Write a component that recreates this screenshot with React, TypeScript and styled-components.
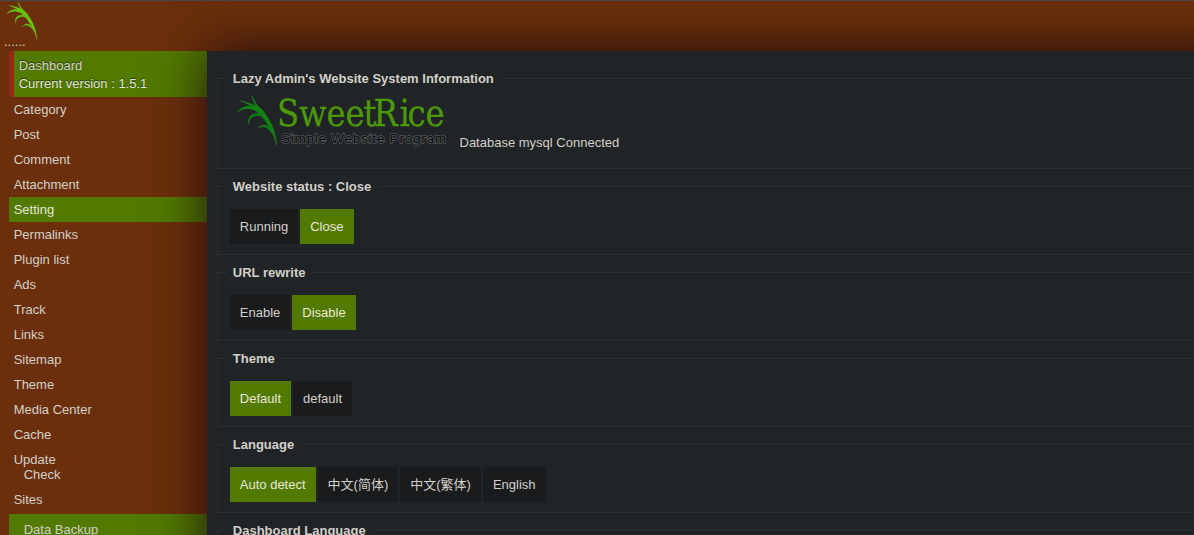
import React from 'react';
import styled, { createGlobalStyle } from 'styled-components';

const GlobalStyle = createGlobalStyle`
  * { box-sizing: border-box; }
  html, body { margin: 0; height: 100%; overflow: hidden; }
  body {
    background: #6b300b;
    color: #d3cfc9;
    font: 13px/15px "Liberation Sans", Arial, "Noto Sans CJK SC", sans-serif;
  }
`;

const Page = styled.div`
  display: flex;
  flex-direction: column;
  height: 535px;
  overflow: hidden;
  border-top: 1px solid #46464a;
`;

const Header = styled.header`
  flex: none;
  height: 50px;
  padding-left: 4px;
`;

const HeaderLogo = styled.div`
  height: 33px;
  padding-left: 2px;
  svg { display: block; }
`;

const Columns = styled.div`
  display: flex;
  flex: 1;
  min-height: 0;
`;

const Sidebar = styled.nav`
  flex: none;
  width: 207px;
  padding-left: 9px;
  white-space: nowrap;
`;

const MenuItem = styled.div<{ $active?: boolean }>`
  padding: 5px 4.7px;
  color: ${(p) => (p.$active ? '#e6e6dc' : 'inherit')};
  background: ${(p) => (p.$active ? '#527a00' : 'transparent')};
`;

const DashboardItem = styled.div`
  height: 46px;
  padding: 6px 4.7px 4px;
  border-left: 5px solid #97261b;
  background: #527a00;
  line-height: 18px;
  text-shadow: 0 -1px 1px rgba(0, 0, 0, 0.55);
`;

const CurrentVersion = styled.div`
  color: #e6e6dc;
`;

const SubItem = styled.div`
  padding-left: 10px;
`;

const SubMenu = styled.div`
  margin-top: 2px;
  padding: 8px 14.7px;
  background: #527a00;
`;

const Content = styled.main`
  position: relative;
  flex: 1;
  min-width: 0;
  height: 620px;
  margin-right: -70px;
  padding: 20px 0 0 10px;
  background: #202426;
  box-shadow: 0 0 50px rgba(25, 4, 18, 0.9);
`;

const Group = styled.fieldset`
  width: 1000px;
  margin: 0 0 10px;
  padding: 15px 12px 10px;
  border: 1px dotted #34383a;
`;

const SystemGroup = styled(Group)`
  height: 98px;
  padding-top: 5px;
`;

const Legend = styled.legend`
  margin-left: -3px;
  padding: 0 5.5px 0 5.8px;
  font-weight: bold;
`;

const Options = styled.div`
  display: flex;
  gap: 2px;
`;

const Option = styled.button<{ $on?: boolean }>`
  height: 35px;
  padding: 0 10.2px 0 9.8px;
  border: 0;
  font: inherit;
  color: ${(p) => (p.$on ? '#e9e7dc' : '#d3cfc9')};
  background: ${(p) => (p.$on ? '#527a00' : '#1a1b1d')};
`;

const SystemInfo = styled.div`
  display: flex;
  align-items: flex-end;
  gap: 9.5px;
  svg { display: block; overflow: visible; }
`;

const Database = styled.span`
  padding-bottom: 1px;
`;

const leaf = [
  'M27 16 Q54 20 73 34 Q106 65 111 118 Q101 76 68 43 Q50 23 27 16Z',
  'M21 41 Q37 21 64 33 L90 56 L76 46 Q45 24 21 41Z',
  'M54 5 Q61 25 81 41 L87 54 L74 42 Q56 23 54 5Z',
  'M46 69 Q42 41 77 46 L83 51 Q48 44 46 69Z',
  'M67 79 Q85 61 102 87 L105 97 Q86 66 67 79Z',
];

const Leaf = ({ color, edge }: { color: string; edge: string }) => (
  <g fill={color} stroke={edge} strokeWidth="1.4" strokeLinejoin="round">
    {leaf.map((d) => <path key={d} d={d} />)}
  </g>
);

const BrandLogo = () => (
  <svg width="220" height="60" viewBox="0 0 220 60">
    <g transform="translate(-1.3 3) scale(0.433)">
      <Leaf color="#088a08" edge="#22752a" />
    </g>
    <text transform="scale(0.85 1)" x="55.3 81.2 113.5 135.9 157 168.8 199.4 208.8 230" y="34.5"
      fontFamily="'DejaVu Serif', serif" fontSize="38" fill="#4b980b" stroke="#4b980b"
      strokeWidth="0.3">SweetRice</text>
    <text x="51" y="52" fontFamily="'Liberation Sans', sans-serif" fontSize="13.5" textLength="165"
      fill="#08090a" stroke="#55585a" strokeWidth="1.5" paintOrder="stroke">Simple Website Program</text>
  </svg>
);

const groups = [
  { title: 'Website status : Close', options: ['Running', 'Close'], on: 1 },
  { title: 'URL rewrite', options: ['Enable', 'Disable'], on: 1 },
  { title: 'Theme', options: ['Default', 'default'], on: 0 },
  { title: 'Language', options: ['Auto detect', '中文(简体)', '中文(繁体)', 'English'], on: 0 },
  { title: 'Dashboard Language', options: ['Auto detect'], on: 0 },
];

const menu = ['Category', 'Post', 'Comment', 'Attachment', 'Setting', 'Permalinks', 'Plugin list',
  'Ads', 'Track', 'Links', 'Sitemap', 'Theme', 'Media Center', 'Cache'];

export default function App() {
  return (
    <>
      <GlobalStyle />
      <Page>
        <Header>
          <HeaderLogo>
            <svg width="34" height="40" viewBox="18 3 102 120">
              <Leaf color="#66d00a" edge="#6aa81c" />
            </svg>
          </HeaderLogo>
          ......
        </Header>
        <Columns>
          <Sidebar>
            <DashboardItem>
              Dashboard
              <CurrentVersion>Current version : 1.5.1</CurrentVersion>
            </DashboardItem>
            {menu.map((m) => <MenuItem key={m} $active={m === 'Setting'}>{m}</MenuItem>)}
            <MenuItem>
              Update
              <SubItem>Check</SubItem>
            </MenuItem>
            <MenuItem>Sites</MenuItem>
            <SubMenu>Data Backup</SubMenu>
          </Sidebar>
          <Content>
            <SystemGroup>
              <Legend>Lazy Admin's Website System Information</Legend>
              <SystemInfo>
                <BrandLogo />
                <Database>Database mysql Connected</Database>
              </SystemInfo>
            </SystemGroup>
            {groups.map((g) => (
              <Group key={g.title}>
                <Legend>{g.title}</Legend>
                <Options>
                  {g.options.map((o, i) => <Option key={o} $on={i === g.on}>{o}</Option>)}
                </Options>
              </Group>
            ))}
          </Content>
        </Columns>
      </Page>
    </>
  );
}
